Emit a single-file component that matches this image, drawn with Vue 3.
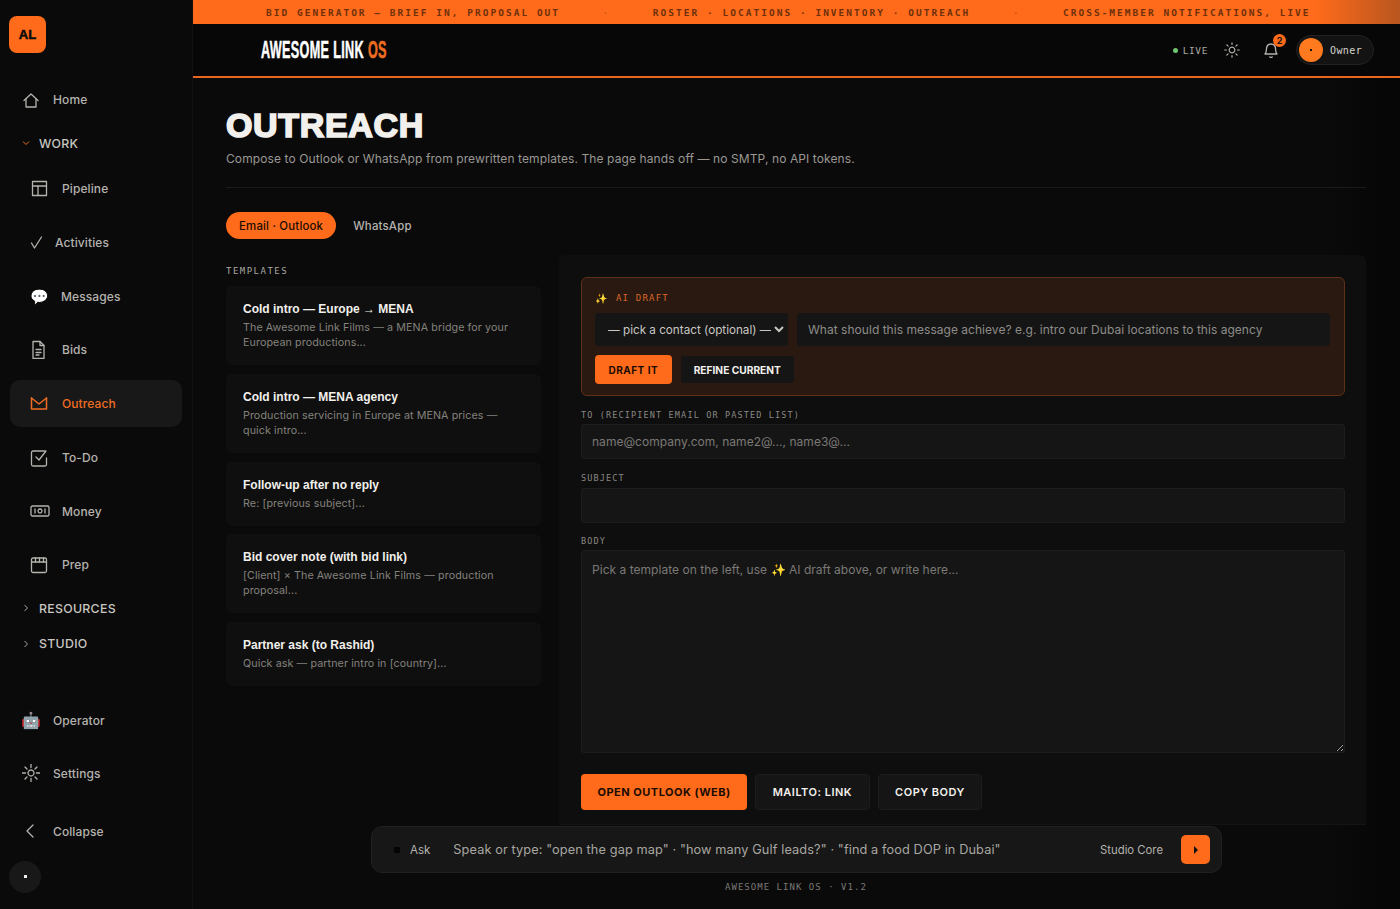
<script setup>
import { ref } from "vue";

const icons = {
  home: ["M2 9.5 9 3l7 6.5", "M4 8v8h10V8"],
  table: ["M2.5 2.5h14v14h-14z", "M2.5 7h14", "M8 7v9.5"],
  check: ["M1.500 10l3 5L11.500 4"],
  doc: ["M3 1.500h7l4 4v13H3z", "M10 1.500v4h4", "M6 9.500h5", "M6 12.500h5", "M6 15h3"],
  mail: ["M1.500 4v11h15V4", "M1.500 4 9 10l7.500-6"],
  todo: ["M15 3H3a1.500 1.500 0 0 0-1.500 1.500v12A1.500 1.500 0 0 0 3 18h12a1.500 1.500 0 0 0 1.500-1.500V10", "M6 9l3 3 7-9"],
  money: ["M2.500 4h15a1.500 1.500 0 0 1 1.500 1.500v7a1.500 1.500 0 0 1-1.500 1.500h-15A1.500 1.500 0 0 1 1 12.500v-7A1.500 1.500 0 0 1 2.500 4z", "M5 7v4", "M15 7v4", "M10 7a2 2 0 1 0 .01 0z"],
  prep: ["M3 3h12a1.500 1.500 0 0 1 1.500 1.500V16a1.500 1.500 0 0 1-1.500 1.500H3A1.500 1.500 0 0 1 1.500 16V4.500A1.500 1.500 0 0 1 3 3z", "M1.500 7h15", "M5.500 3v4", "M9.500 3v4", "M13.500 3v4"],
  sun: ["M9 6a3 3 0 1 0 .01 0z", "M9 .5v3", "M9 14.500v3", "M.5 9h3", "M14.500 9h3", "M3 3l2 2", "M13 13l2 2", "M3 15l2-2", "M13 5l2-2"],
  back: ["M11 3 5 9l6 6"],
};

const workItems = [
  { label: "Pipeline", icon: "table", w: 18, gap: 14 },
  { label: "Activities", icon: "check", w: 13, gap: 12 },
  { label: "Messages", emoji: "💬", gap: 13 },
  { label: "Bids", icon: "doc", w: 17, gap: 15 },
  { label: "Outreach", icon: "mail", w: 18, gap: 14, active: true },
  { label: "To-Do", icon: "todo", w: 18, gap: 14 },
  { label: "Money", icon: "money", w: 20, gap: 12 },
  { label: "Prep", icon: "prep", w: 18, gap: 14 },
];

const ticker = [
  "BID GENERATOR — BRIEF IN, PROPOSAL OUT",
  "ROSTER · LOCATIONS · INVENTORY · OUTREACH",
  "CROSS-MEMBER NOTIFICATIONS, LIVE",
];

const templates = [
  { title: "Cold intro — Europe → MENA", text: "The Awesome Link Films — a MENA bridge for your European productions..." },
  { title: "Cold intro — MENA agency", text: "Production servicing in Europe at MENA prices — quick intro..." },
  { title: "Follow-up after no reply", text: "Re: [previous subject]..." },
  { title: "Bid cover note (with bid link)", text: "[Client] × The Awesome Link Films — production proposal..." },
  { title: "Partner ask (to Rashid)", text: "Quick ask — partner intro in [country]..." },
];

const tab = ref("email");
</script>

<template>
  <div class="app">
    <aside class="sidebar">
      <div class="logo">AL</div>

      <nav class="nav">
        <a class="nav-top">
          <svg class="ico" width="18" height="18" viewBox="0 0 18 18"><path v-for="d in icons.home" :key="d" :d="d" /></svg>
          <span>Home</span>
        </a>

        <div class="group group-work">
          <svg class="chev open" width="8" height="8" viewBox="0 0 8 8"><path d="M1 2.500 4 5.500l3-3" /></svg>
          <span>WORK</span>
        </div>

        <a v-for="item in workItems" :key="item.label" :class="['nav-sub', { active: item.active }]" :style="{ gap: item.gap + 'px' }">
          <span v-if="item.emoji" class="emoji">{{ item.emoji }}</span>
          <svg v-else class="ico" :width="item.w" height="19" :viewBox="`0 0 ${item.w} 19`"><path v-for="d in icons[item.icon]" :key="d" :d="d" /></svg>
          <span>{{ item.label }}</span>
        </a>

        <div class="group group-res">
          <svg class="chev" width="8" height="8" viewBox="0 0 8 8"><path d="M2.500 1 5.500 4l-3 3" /></svg>
          <span>RESOURCES</span>
        </div>
        <div class="group group-stu">
          <svg class="chev" width="8" height="8" viewBox="0 0 8 8"><path d="M2.500 1 5.500 4l-3 3" /></svg>
          <span>STUDIO</span>
        </div>

        <a class="nav-top nav-operator">
          <span class="emoji robot">🤖</span>
          <span>Operator</span>
        </a>
        <a class="nav-top nav-settings">
          <svg class="ico" width="18" height="18" viewBox="0 0 18 18"><path v-for="d in icons.sun" :key="d" :d="d" /></svg>
          <span>Settings</span>
        </a>
        <a class="nav-top nav-collapse">
          <svg class="ico" width="18" height="18" viewBox="0 0 18 18"><path v-for="d in icons.back" :key="d" :d="d" /></svg>
          <span>Collapse</span>
        </a>
      </nav>

      <div class="user-dot"><i></i></div>
    </aside>

    <div class="main">
      <div class="ticker">
        <template v-for="(line, i) in ticker" :key="line">
          <span>{{ line }}</span>
          <span v-if="i < ticker.length - 1" class="sep">·</span>
        </template>
      </div>

      <header class="topbar">
        <div class="brand"><b>AWESOME LINK</b> <em>OS</em></div>
        <div class="top-right">
          <span class="live"><i></i>LIVE</span>
          <svg class="ico sun" width="16" height="16" viewBox="0 0 18 18"><path d="M9 5.800a3.200 3.200 0 1 0 .01 0z" /><path d="M9 .8v2M9 15.200v2M.8 9h2M15.200 9h2M3.200 3.200l1.400 1.400M13.400 13.400l1.400 1.400M3.200 14.800l1.400-1.400M13.400 4.600l1.400-1.400" /></svg>
          <span class="bell">
            <svg class="ico" width="16" height="18" viewBox="0 0 16 18"><path d="M2 13c1-1.200 1.400-2.300 1.400-4.500C3.400 5.500 5 3 8 3s4.600 2.500 4.600 5.500c0 2.200.4 3.300 1.400 4.500z" /><path d="M6.800 16c.7.500 1.700.5 2.400 0" /></svg>
            <i>2</i>
          </span>
          <div class="owner"><span class="owner-dot"><i></i></span>Owner</div>
        </div>
      </header>

      <main class="content">
        <h1>OUTREACH</h1>
        <p class="sub">Compose to Outlook or WhatsApp from prewritten templates. The page hands off — no SMTP, no API tokens.</p>
        <div class="rule"></div>

        <div class="tabs">
          <button :class="['tab', { on: tab === 'email' }]" @click="tab = 'email'">Email · Outlook</button>
          <button :class="['tab', { on: tab === 'wa' }]" @click="tab = 'wa'">WhatsApp</button>
        </div>

        <div class="columns">
          <section class="tpl-col">
            <div class="mono-label tpl-label">TEMPLATES</div>
            <div class="tpl-list">
              <article v-for="t in templates" :key="t.title" class="tpl">
                <h3>{{ t.title }}</h3>
                <p>{{ t.text }}</p>
              </article>
            </div>
          </section>

          <section class="panel">
            <div class="ai">
              <div class="ai-label"><span class="spark">✨</span>AI DRAFT</div>
              <div class="ai-row">
                <select class="field ai-select"><option>— pick a contact (optional) —</option></select>
                <input class="field ai-input" placeholder="What should this message achieve? e.g. intro our Dubai locations to this agency" />
              </div>
              <div class="ai-btns">
                <button class="btn-primary small">DRAFT IT</button>
                <button class="btn-refine">REFINE CURRENT</button>
              </div>
            </div>

            <label class="mono-label field-label first">TO (RECIPIENT EMAIL OR PASTED LIST)</label>
            <input class="field wide" placeholder="name@company.com, name2@..., name3@..." />
            <label class="mono-label field-label">SUBJECT</label>
            <input class="field wide" />
            <label class="mono-label field-label body-label">BODY</label>
            <textarea class="field body" placeholder="Pick a template on the left, use ✨ AI draft above, or write here..."></textarea>

            <div class="actions">
              <button class="btn-primary">OPEN OUTLOOK (WEB)</button>
              <button class="btn-ghost">MAILTO: LINK</button>
              <button class="btn-ghost">COPY BODY</button>
            </div>
          </section>
        </div>
      </main>

      <div class="askbar">
        <i class="ask-dot"></i>
        <span class="ask-label">Ask</span>
        <input class="ask-input" placeholder="Speak or type: &quot;open the gap map&quot; · &quot;how many Gulf leads?&quot; · &quot;find a food DOP in Dubai&quot;" />
        <span class="ask-model">Studio Core</span>
        <button class="ask-send"><svg width="6" height="8" viewBox="0 0 6 8"><path d="M1 0l4 4-4 4z" fill="#111" /></svg></button>
      </div>
      <div class="foot">AWESOME LINK OS · V1.2</div>
    </div>
  </div>
</template>

<style>
html, body { margin: 0; background: #0a0a0a; overflow: hidden; }
</style>

<style scoped>
.app {
  display: flex;
  height: 909px;
  overflow: hidden;
  background: #0a0a0a;
  font-family: Inter, "Liberation Sans", sans-serif;
  color: #f2f0ec;
}

/* sidebar */
.sidebar {
  width: 193px;
  flex: none;
  box-sizing: border-box;
  padding: 16px 10px 0 9px;
  background: #0a0a0a;
  border-right: 1px solid #111;
}
.logo {
  width: 37px;
  height: 37px;
  border-radius: 8px;
  background: #ff6b1a;
  color: #0a0a0a;
  font: 900 13px/37px "Liberation Sans", sans-serif;
  text-align: center;
  -webkit-text-stroke: .5px #0a0a0a;
}
.nav { display: flex; flex-direction: column; margin-top: 23px; font-size: 12px; font-weight: 500; color: #b5b3ae; }
.nav a { display: flex; align-items: center; letter-spacing: .1px; }
.nav-top { height: 47px; padding-left: 12px; gap: 13px; margin-left: 1px; }
.nav-sub { height: 47px; padding-left: 20px; margin: 0 0 6.750px 1px; border-radius: 10px; }
.nav-sub.active { background: #181818; color: #ef6d22; }
.nav-sub.active .ico path { stroke: #ef6d22; stroke-width: 1.500; }
.ico path { fill: none; stroke: #b5b3ae; stroke-width: 1.300; stroke-linecap: round; stroke-linejoin: round; }
.emoji { font-size: 15px; line-height: 1; width: 18px; text-align: center; }
.robot { font-size: 16px; margin-left: -1px; margin-right: 1px; }
.group { display: flex; align-items: center; gap: 9px; padding-left: 13px; height: 20px; color: #c9c7c2; font-size: 12.300px; letter-spacing: .3px; }
.group-work { margin: 10px 0 12px; }
.group-res { margin: 3px 0 0; }
.group-stu { margin: 15.500px 0 0; }
.nav-operator { margin-top: 43px; }
.nav-settings { margin-top: 6px; }
.nav-collapse { margin-top: 11px; }
.chev { flex: none; }
.chev path { fill: none; stroke: #a8a6a1; stroke-width: 1; }
.chev.open path { stroke: #ef6d22; }
.user-dot {
  width: 32px;
  height: 32px;
  margin-top: 6px;
  border-radius: 50%;
  background: #181818;
  display: flex;
  align-items: center;
  justify-content: center;
}
.user-dot i { width: 3px; height: 3px; background: #eee; }

/* main column */
.main { position: relative; flex: 1; min-width: 0; background: linear-gradient(90deg, #0a0a0b 94%, #050505 100%); }
.ticker {
  height: 24px;
  display: flex;
  align-items: center;
  gap: 42.500px;
  padding-left: 73px;
  background: linear-gradient(90deg, #ff6b1a 93%, #b8561f 100%);
  color: #6e300c;
  font: 700 9.500px "DejaVu Sans Mono", monospace;
  letter-spacing: 2.020px;
  white-space: nowrap;
  overflow: hidden;
}
.sep { color: #c9571a; }
.topbar {
  height: 52px;
  border-bottom: 2px solid #e8661f;
  background: #070707;
  display: flex;
  align-items: center;
  justify-content: space-between;
  padding: 0 26px 0 68px;
}
.brand {
  font: 700 23px "Liberation Sans Narrow", "Liberation Sans", sans-serif;
  letter-spacing: .6px;
  color: #fff;
  transform: scaleX(.55);
  transform-origin: left center;
  white-space: nowrap;
  -webkit-text-stroke: .5px currentColor;
}
.brand b { font-weight: 700; }
.brand em { font-style: normal; color: #ef6d22; }
.top-right { display: flex; align-items: center; }
.live { display: flex; align-items: center; gap: 5px; font: 9.500px "DejaVu Sans Mono", monospace; letter-spacing: .6px; color: #a8a6a1; }
.live i { width: 5px; height: 5px; border-radius: 50%; background: #6fc46f; }
.sun { margin-left: 16px; }
.bell { position: relative; margin-left: 23px; height: 18px; }
.bell i {
  position: absolute;
  top: -7px;
  left: 10px;
  width: 13px;
  height: 13px;
  border-radius: 50%;
  background: #ff6b1a;
  color: #111;
  font: 700 9px/13px Inter, sans-serif;
  text-align: center;
}
.owner {
  margin-left: 17px;
  width: 78px;
  height: 30px;
  box-sizing: border-box;
  border: 1px solid #222;
  border-radius: 16px;
  background: #131313;
  display: flex;
  align-items: center;
  gap: 7px;
  padding-left: 2px;
  font: 10px "DejaVu Sans Mono", monospace;
  letter-spacing: .4px;
  color: #d5d3ce;
}
.owner-dot { width: 24px; height: 24px; border-radius: 50%; background: #ff7a1f; display: flex; align-items: center; justify-content: center; }
.owner-dot i { width: 2px; height: 2px; background: #111; }

/* content */
.content { padding: 30px 34px 0 33px; }
h1 {
  margin: 0;
  font: 900 34px/34px "Liberation Sans", sans-serif;
  letter-spacing: .65px;
  color: #f2f0ec;
  -webkit-text-stroke: 1.700px #f2f0ec;
}
.sub { margin: 8px 0 0; font-size: 12px; line-height: 18px; color: #9a9893; letter-spacing: .1px; }
.rule { height: 1px; margin-top: 19px; background: #1a1a1a; }
.tabs { display: flex; gap: 4px; margin-top: 24px; }
.tab {
  height: 27px;
  padding: 0 13px;
  border: 0;
  border-radius: 14px;
  background: none;
  color: #b5b3ae;
  font: 500 11.400px Inter, sans-serif;
  letter-spacing: .2px;
}
.tab.on { background: #ff6b1a; color: #1a0c03; }
.columns { display: grid; grid-template-columns: 315px 1fr; gap: 18px; margin-top: 16px; }
.mono-label { font: 8.500px "DejaVu Sans Mono", monospace; letter-spacing: 1.140px; color: #8a8883; display: block; }
.tpl-label { margin-top: 11px; font-size: 9px; letter-spacing: 1.480px; color: #a8a6a1; }
.tpl-list { display: flex; flex-direction: column; gap: 8.750px; margin-top: 10px; }
.tpl { padding: 15px 18px 15px 17px; background: #0f0f0f; border-radius: 6px; }
.tpl h3 { margin: 0; font: 700 12px/17px "Liberation Sans", sans-serif; color: #f2f0ec; }
.tpl p { margin: 2px 0 0; font-size: 10.700px; line-height: 15px; letter-spacing: .1px; color: #84827d; }

/* composer */
.panel { height: 570px; box-sizing: border-box; padding: 22px 21px 0 22px; background: #0e0e0e; border-radius: 6px 6px 0 0; border-bottom: 1px solid #141414; }
.ai {
  height: 119px;
  box-sizing: border-box;
  padding: 14px 14px 0 13px;
  background: #2a1910;
  border: 1px solid #5f3217;
  border-radius: 6px;
}
.ai-label { display: flex; align-items: center; gap: 9px; height: 12px; font: 9px "DejaVu Sans Mono", monospace; letter-spacing: 1.200px; color: #d9662a; }
.spark { font-size: 10px; letter-spacing: 0; }
.ai-row { display: flex; gap: 9px; margin-top: 9px; }
.field {
  box-sizing: border-box;
  background: #151515;
  border: 1px solid #1d1d1d;
  border-radius: 3px;
  color: #d5d3ce;
  font: 12px Inter, sans-serif;
  letter-spacing: .03px;
  outline: none;
}
.field::placeholder { color: #7b7976; opacity: 1; }
.ai-select { width: 193px; height: 33px; padding-left: 8px; border-color: #151515; color: #c9c7c2; font-size: 11.700px; letter-spacing: 0; }
.ai-input { flex: 1; height: 33px; padding: 0 10px; border-color: #151515; }
.ai-input::placeholder { color: #8e8c88; }
.ai-btns { display: flex; align-items: center; gap: 9px; margin-top: 9px; }
button { cursor: pointer; }
.btn-primary {
  height: 36px;
  padding: 0 16.500px;
  border: 0;
  border-radius: 4px;
  background: #ff6b1a;
  color: #1a0c03;
  font: 700 11px Inter, sans-serif;
  letter-spacing: .5px;
}
.btn-primary.small { height: 29px; padding: 0 13.500px; font-size: 10px; }
.btn-refine { height: 27px; padding: 0 13px; border: 0; border-radius: 3px; background: #151515; color: #f2f0ec; font: 700 10.200px Inter, sans-serif; }
.field-label { height: 10px; line-height: 10px; margin: 14px 0 5px; }
.field-label.first { margin: 14px 0 4px; }
.field-label.body-label { margin-bottom: 4px; margin-top: 13px; }
.wide { display: block; width: 100%; height: 35px; padding: 0 10px; }
.body { display: block; width: 100%; height: 203px; padding: 11px 10px; resize: vertical; }
.actions { display: flex; gap: 8px; margin-top: 21px; }
.btn-ghost {
  height: 36px;
  padding: 0 16.500px;
  border: 1px solid #1d1d1d;
  border-radius: 4px;
  background: #151515;
  color: #f2f0ec;
  font: 600 11px Inter, sans-serif;
  letter-spacing: .5px;
}

/* floating ask bar over the page */
.askbar {
  position: absolute;
  left: 178px;
  top: 826px;
  width: 851px;
  height: 47px;
  box-sizing: border-box;
  display: flex;
  align-items: center;
  padding: 0 11px 0 22px;
  background: #171717;
  border: 1px solid #202020;
  border-radius: 11px;
}
.ask-dot { width: 6px; height: 6px; border-radius: 1px; background: #050505; }
.ask-label { margin-left: 10px; font-size: 11.500px; color: #b5b3ae; }
.ask-input { flex: 1; margin-left: 21px; background: none; border: 0; outline: none; font: 12.750px Inter, sans-serif; letter-spacing: .1px; }
.ask-input::placeholder { color: #a8a6a1; opacity: 1; }
.ask-model { font-size: 11.300px; color: #b5b3ae; margin-right: 18px; }
.ask-send { width: 29px; height: 29px; padding: 0; border: 0; border-radius: 5px; background: #ff6b1a; display: flex; align-items: center; justify-content: center; }
.foot {
  position: absolute;
  left: 532px;
  top: 882px;
  font: 9px "DejaVu Sans Mono", monospace;
  letter-spacing: 1.030px;
  color: #7b7976;
  white-space: nowrap;
}
</style>
